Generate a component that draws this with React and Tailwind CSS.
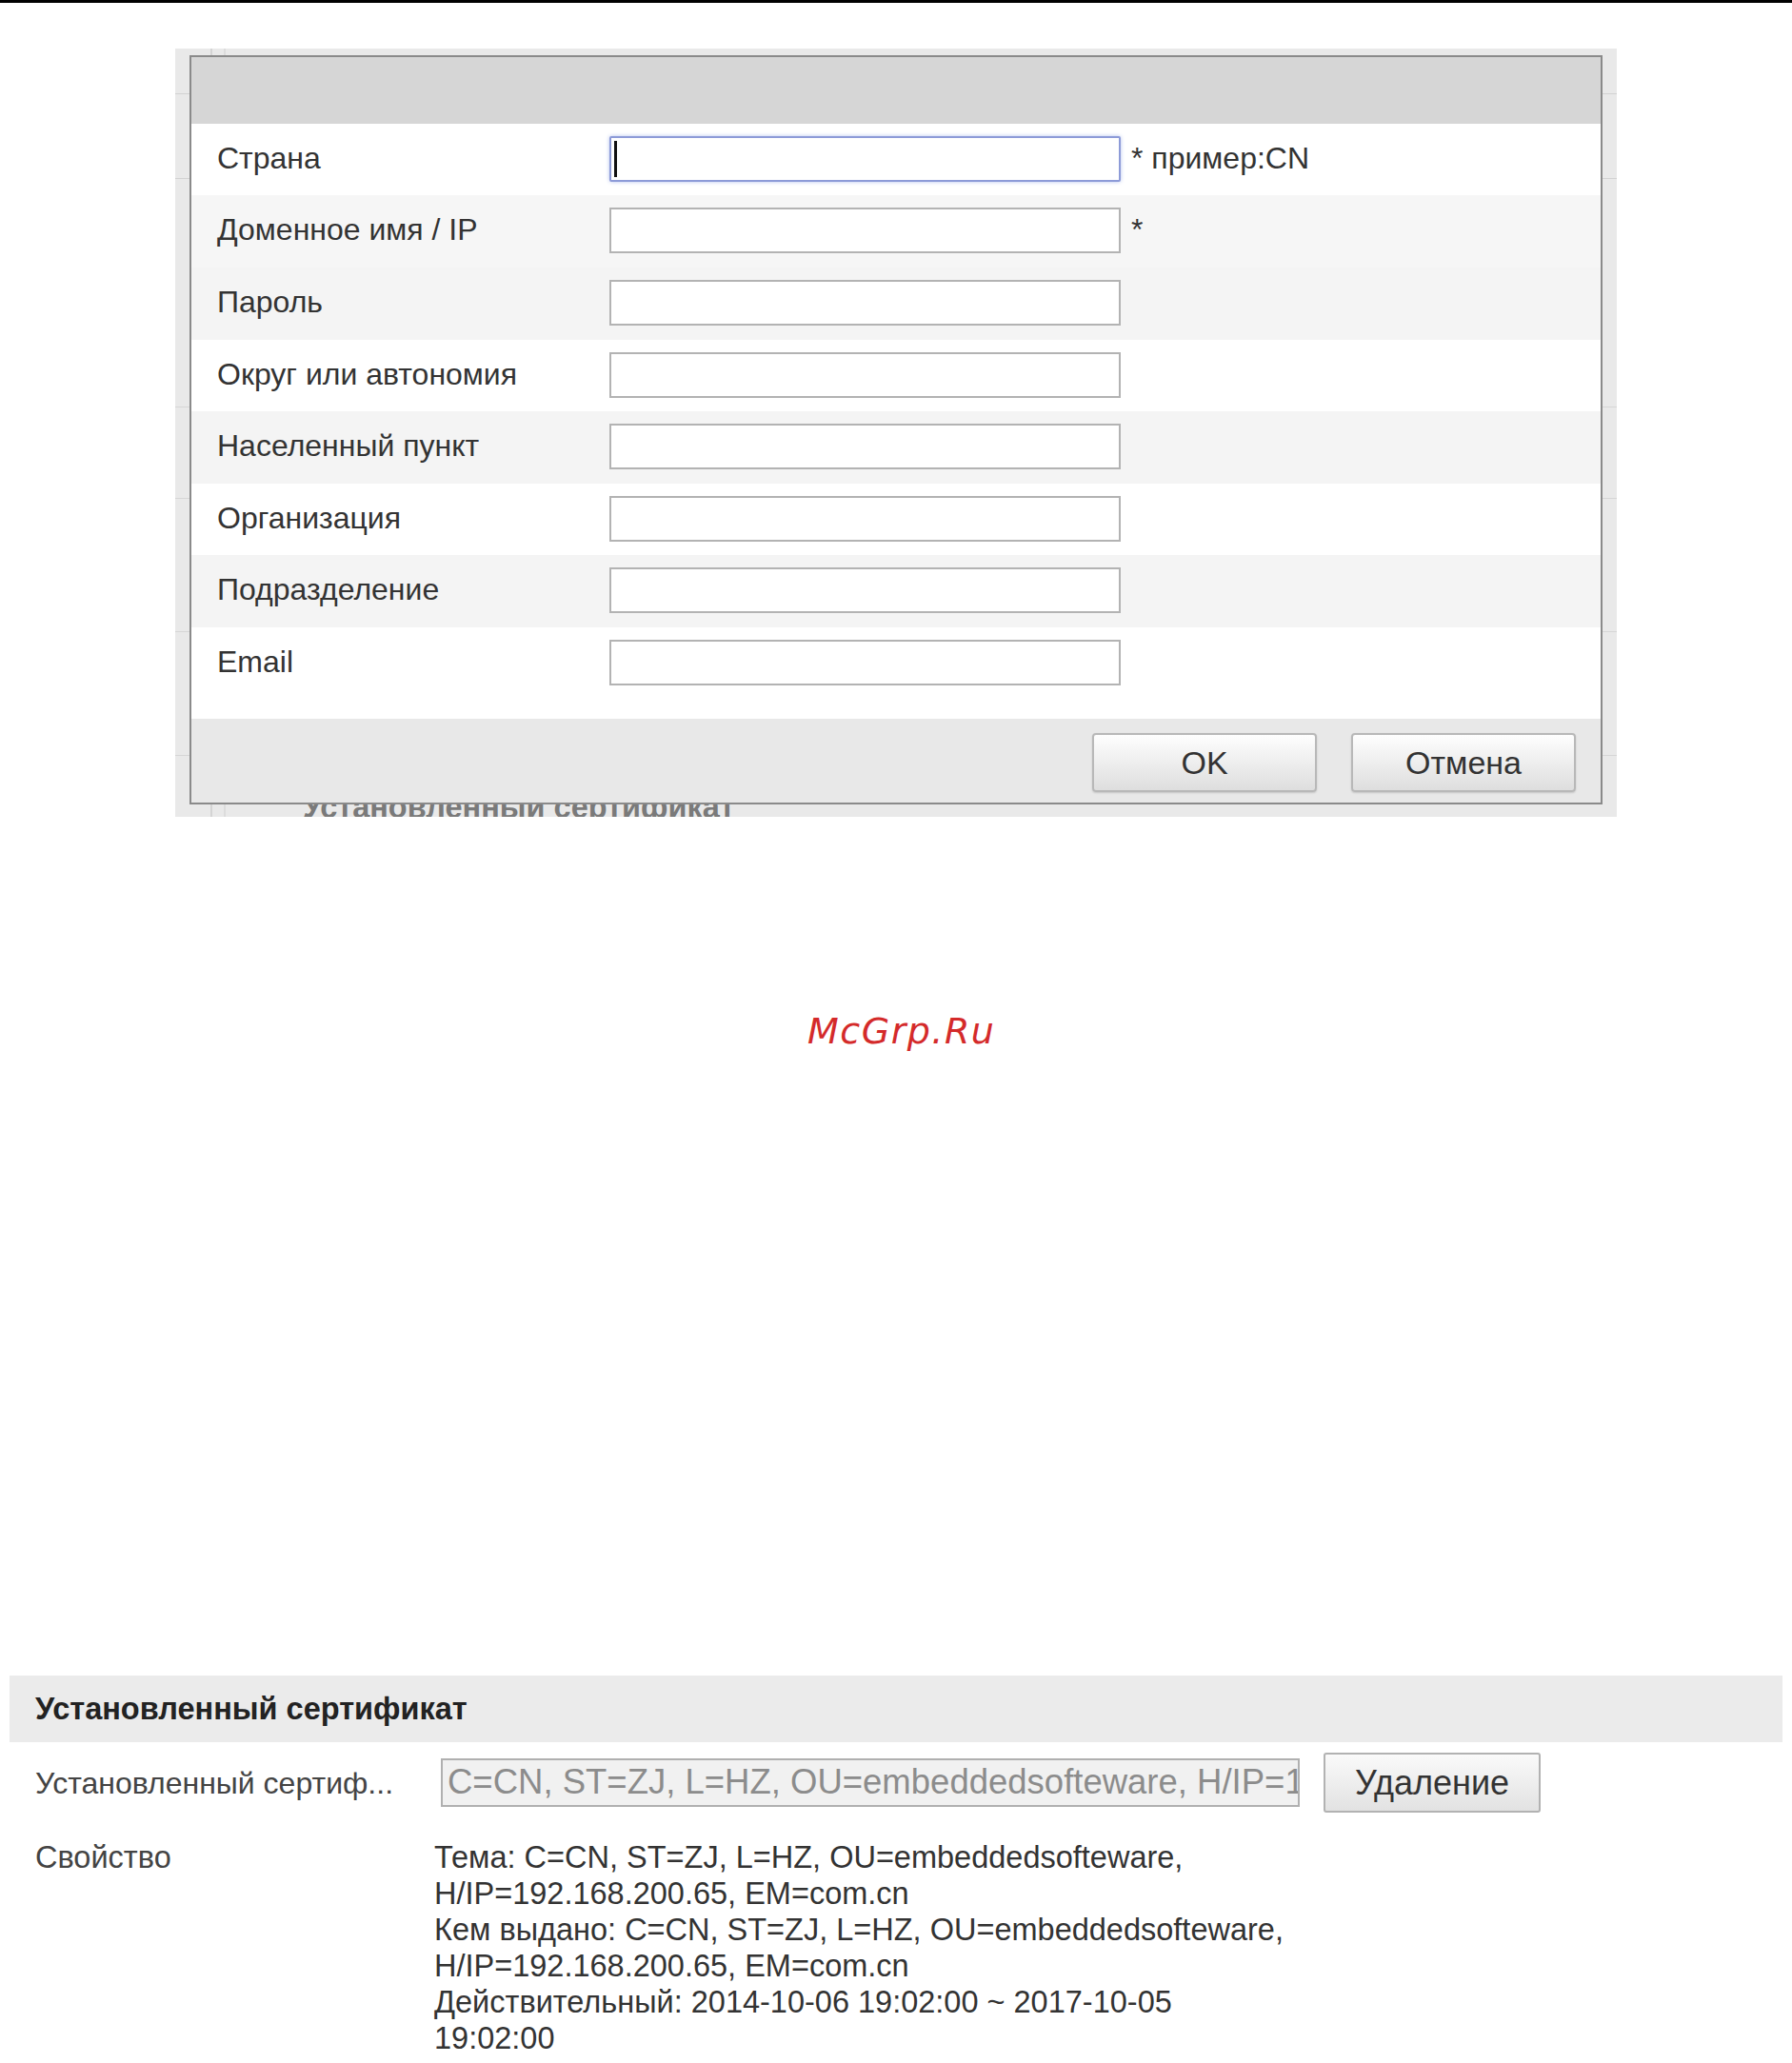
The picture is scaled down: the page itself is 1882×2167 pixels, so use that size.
import React from "react";

const rows = [
  { label: "Страна", h: "h-[75px]", bg: "bg-white", note: "* пример:CN", focus: true },
  { label: "Доменное имя / IP", h: "h-[76px]", bg: "bg-[#f6f6f6]", note: "*" },
  { label: "Пароль", h: "h-[76px]", bg: "bg-[#f4f4f4]" },
  { label: "Округ или автономия", h: "h-[75px]", bg: "bg-white" },
  { label: "Населенный пункт", h: "h-[76px]", bg: "bg-[#f4f4f4]" },
  { label: "Организация", h: "h-[75px]", bg: "bg-white" },
  { label: "Подразделение", h: "h-[76px]", bg: "bg-[#f4f4f4]" },
  { label: "Email", h: "h-[96px]", bg: "bg-white" },
];

function FormRow({ row }) {
  return (
    <div className={`flex items-start pt-[13px] pl-[27px] ${row.h} ${row.bg}`}>
      <div className="w-[412px] h-[46px] flex items-center text-[32px] text-[#333]">{row.label}</div>
      <div className="relative w-[537px] h-[48px]">
        <input
          type="text"
          readOnly
          className={
            row.focus
              ? "w-full h-full bg-white border-2 border-[#8d9bd8] rounded-[2px] shadow-[0_0_4px_#b5c2ee] outline-none"
              : "w-full h-full bg-white border-2 border-[#b3b3b3] outline-none"
          }
        />
        {row.focus && <div className="absolute left-[5px] top-[5px] w-[3px] h-[38px] bg-[#111]" />}
      </div>
      {row.note && (
        <div className="ml-[11px] h-[46px] flex items-center text-[32px] text-[#333] whitespace-nowrap">{row.note}</div>
      )}
    </div>
  );
}

function DlgButton({ children }) {
  return (
    <button className="w-[236px] h-[62px] rounded-[4px] border-2 border-[#b8b8b8] bg-gradient-to-b from-[#fefefe] to-[#dedede] text-[34px] text-[#333] shadow-[0_1px_2px_rgba(0,0,0,0.15)]">
      {children}
    </button>
  );
}

export default function App() {
  return (
    <div
      className="w-[1882px] h-[2167px] bg-white overflow-hidden"
      style={{ fontFamily: '"Liberation Sans", Arial, sans-serif' }}
    >
      <div className="h-[3px] bg-black" />

      {/* dialog screenshot frame */}
      <div className="pt-[48px]">
        <div className="relative ml-[184px] w-[1514px] h-[807px] bg-[#e9e9e9] overflow-hidden pt-[7px] pl-[15px]">
          {/* background page lines */}
          <div className="absolute left-[37px] top-0 bottom-0 w-[2px] bg-[#d4d4d4]" />
          <div className="absolute left-[51px] top-0 bottom-0 w-[2px] bg-[#dcdcdc]" />
          <div className="absolute left-0 right-0 top-[47px] h-px bg-[#d2d2d2]" />
          <div className="absolute left-0 right-0 top-[136px] h-px bg-[#d2d2d2]" />
          <div className="absolute left-0 right-0 top-[376px] h-px bg-[#d6d6d6]" />
          <div className="absolute left-0 right-0 top-[472px] h-px bg-[#d6d6d6]" />
          <div className="absolute left-0 right-0 top-[612px] h-px bg-[#d6d6d6]" />
          <div className="absolute left-0 right-0 top-[742px] h-px bg-[#d6d6d6]" />
          <div className="absolute left-[134px] top-[781px] text-[32.5px] font-bold leading-none text-[#7a7a7a] whitespace-nowrap">
            Установленный сертификат
          </div>

          <div className="relative z-10 w-[1484px] border-2 border-[#8a8a8a] bg-white">
            <div className="h-[70px] bg-[#d6d6d6]" />
            {rows.map((r) => (
              <FormRow key={r.label} row={r} />
            ))}
            <div className="h-[88px] bg-[#e8e8e8] flex justify-end items-start pt-[15px] pr-[26px] gap-[36px]">
              <DlgButton>OK</DlgButton>
              <DlgButton>Отмена</DlgButton>
            </div>
          </div>
        </div>
      </div>

      {/* watermark */}
      <div
        className="mt-[206px] h-[38px] pl-[848px] text-[38px] leading-none italic tracking-[1.5px] text-[#d42a2a]"
        style={{ fontFamily: '"DejaVu Sans", sans-serif' }}
      >
        McGrp.Ru
      </div>

      {/* installed certificate section */}
      <div className="mt-[658px] ml-[10px] w-[1862px] h-[70px] bg-[#ebebeb] flex items-center pl-[27px]">
        <span className="text-[32.5px] font-bold text-[#222]">Установленный сертификат</span>
      </div>

      <div className="mt-[11px] h-[63px] flex items-center pl-[37px]">
        <div className="w-[426px] text-[32px] text-[#444] whitespace-nowrap">Установленный сертиф...</div>
        <input
          type="text"
          readOnly
          value="C=CN, ST=ZJ, L=HZ, OU=embeddedsofteware, H/IP=192.168.200.65, EM=com.cn"
          className="w-[902px] h-[51px] bg-[#f1f1f1] border-2 border-[#b0b0b0] pl-[5px] text-[36.5px] text-[#8c8c8c] outline-none"
          style={{ fontFamily: '"Liberation Sans", Arial, sans-serif' }}
        />
        <button className="ml-[25px] w-[228px] h-[63px] rounded-[3px] border-2 border-[#b2b2b2] bg-gradient-to-b from-[#fafafa] to-[#e2e2e2] text-[36px] text-[#333]">
          Удаление
        </button>
      </div>

      <div className="mt-[28px] flex pl-[37px] text-[32.5px] leading-[38px]">
        <div className="w-[419px] text-[#444]">Свойство</div>
        <div className="text-[#333] whitespace-nowrap">
          <div>Тема: C=CN, ST=ZJ, L=HZ, OU=embeddedsofteware,</div>
          <div>H/IP=192.168.200.65, EM=com.cn</div>
          <div>Кем выдано: C=CN, ST=ZJ, L=HZ, OU=embeddedsofteware,</div>
          <div>H/IP=192.168.200.65, EM=com.cn</div>
          <div>Действительный: 2014-10-06 19:02:00 ~ 2017-10-05</div>
          <div>19:02:00</div>
        </div>
      </div>
    </div>
  );
}
